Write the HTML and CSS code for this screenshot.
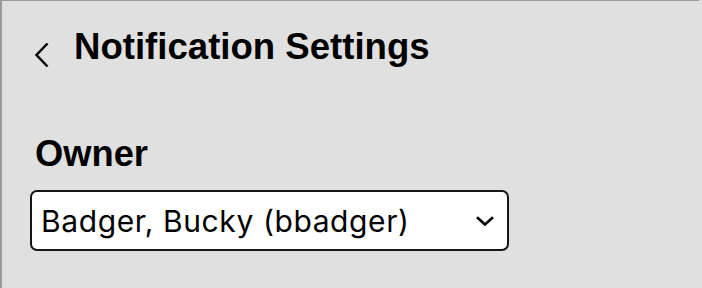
FILE: index.html
```html
<!DOCTYPE html>
<html lang="en">
<head>
<meta charset="utf-8">
<title>Notification Settings</title>
<link rel="stylesheet" href="styles.css">
</head>
<body>
<div class="panel">
  <header class="header">
    <button class="back" aria-label="Back">
      <svg width="15" height="26" viewBox="0 0 15 26"><path d="M13.5 1.5 L2.5 13 L13.5 24.5" fill="none" stroke="#000" stroke-width="2.5"/></svg>
    </button>
    <h1 class="title">Notification Settings</h1>
  </header>
  <section class="field">
    <label class="label" for="owner">Owner</label>
    <div class="select-wrap">
      <select id="owner" class="select">
        <option>Badger, Bucky (bbadger)</option>
      </select>
      <svg class="caret" width="18" height="10" viewBox="0 0 18 10"><path d="M1 1.2 L9 8.5 L17 1.2" fill="none" stroke="#000" stroke-width="2.6"/></svg>
    </div>
  </section>
</div>
</body>
</html>
```

FILE: styles.css
```css
html, body {
  margin: 0;
  padding: 0;
  background: #e0e0e0;
  font-family: "Liberation Sans", Arial, sans-serif;
  color: #000;
}
.panel {
  height: 288px;
  box-sizing: border-box;
  border-top: 1px solid #9a9a9a;
  border-left: 2px solid #9a9a9a;
  margin-right: 3px;
}
.header {
  display: flex;
  align-items: center;
  padding: 25px 0 0 32px;
}
.back {
  border: 0;
  background: none;
  padding: 0;
  margin: 16px 0 0 0;
  width: 40px;
  display: flex;
  align-items: flex-start;
  cursor: pointer;
}
.title {
  margin: 0;
  font-size: 36.6px;
  line-height: 40px;
  font-weight: bold;
}
.field {
  padding: 66px 0 0 33px;
}
.label {
  display: block;
  font-size: 36.3px;
  line-height: 40px;
  font-weight: bold;
}
.select-wrap {
  position: relative;
  margin: 16px 0 0 -5px;
  width: 479px;
}
.select {
  appearance: none;
  -webkit-appearance: none;
  width: 100%;
  height: 61px;
  box-sizing: border-box;
  border: 2px solid #161616;
  border-radius: 7px;
  background: #fff;
  font-family: Inter, "Liberation Sans", Arial, sans-serif;
  font-size: 30px;
  letter-spacing: 0.6px;
  color: #000;
  padding: 0 40px 0 9px;
}
.caret {
  position: absolute;
  right: 15px;
  top: 26px;
  pointer-events: none;
}
```
